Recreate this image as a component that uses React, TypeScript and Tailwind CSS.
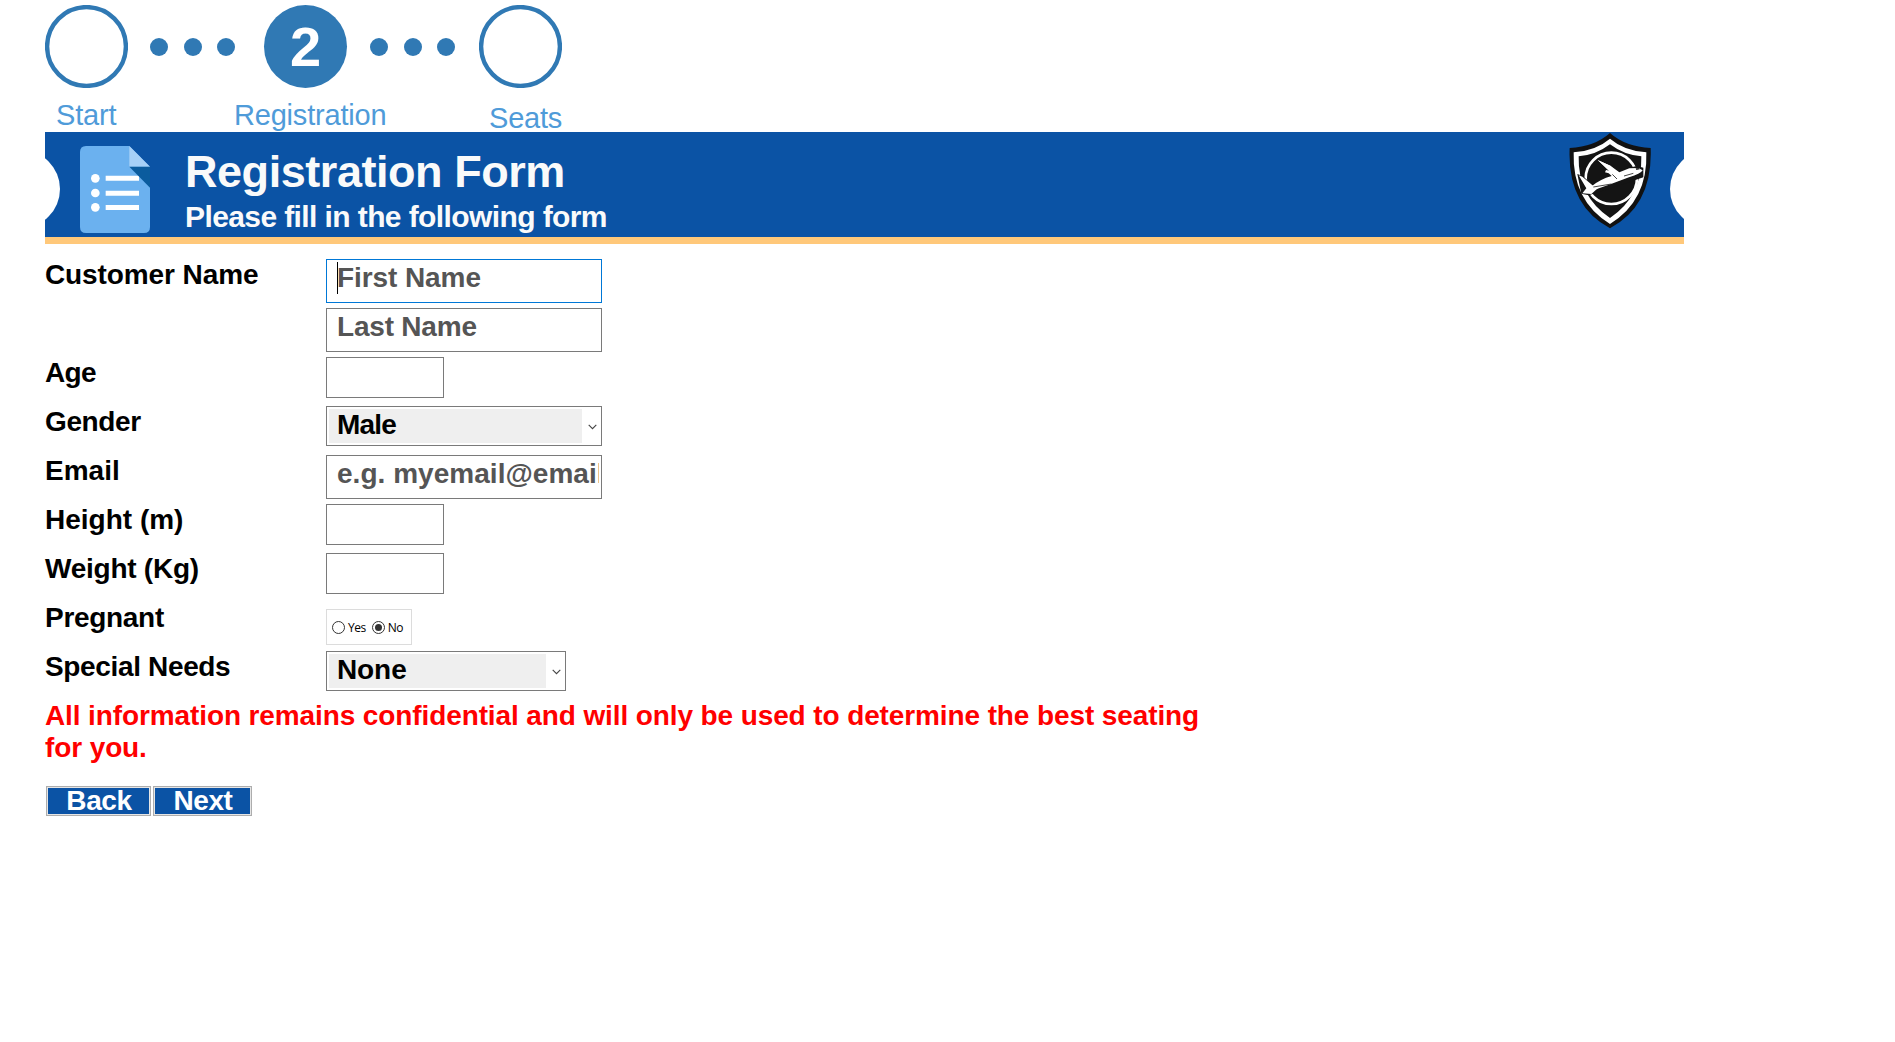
import React from "react";

const ARIAL = "font-['Liberation_Sans',Arial,sans-serif]";

function Ring() {
  return (
    <svg className="size-[83px] shrink-0" viewBox="0 0 83 83">
      <circle cx="41.5" cy="41.5" r="39.4" fill="#fff" stroke="#3079b4" strokeWidth="4.4" />
    </svg>
  );
}

function Dots() {
  return (
    <div className="flex items-center pt-px">
      <i className="size-[18px] rounded-full bg-[#3079b4]" />
      <i className="ml-4 size-[18px] rounded-full bg-[#3079b4]" />
      <i className="ml-[15px] size-[18px] rounded-full bg-[#3079b4]" />
    </div>
  );
}

function Steps() {
  return (
    <div className="h-[132px] pt-[5px]">
      <div className="flex h-[83px]">
        <Ring />
        <div className="ml-[22px] flex w-[114px]"><Dots /></div>
        <div className="flex size-[83px] items-center justify-center rounded-full bg-[#3079b4] text-[56px] leading-[83px] font-bold text-white">2</div>
        <div className="ml-[23px] flex w-[109px]"><Dots /></div>
        <Ring />
      </div>
      <div className="flex text-[29px] leading-[32px] whitespace-nowrap text-[#4f9bd9]">
        <span className="ml-[11px] mt-[11px] w-[178px] tracking-[-0.2px]">Start</span>
        <span className="mt-[11px] w-[255px] tracking-[-0.2px]">Registration</span>
        <span className="mt-[14px] tracking-[-0.2px]">Seats</span>
      </div>
    </div>
  );
}

function FormIcon() {
  return (
    <svg className="mt-[14px] ml-[35px] h-[87px] w-[70px] shrink-0" viewBox="0 0 210 261">
      <path d="M18 0H148L210 62V243Q210 261 192 261H18Q0 261 0 243V18Q0 0 18 0Z" fill="#6bb1ef" />
      <path d="M148 0L210 62H148Z" fill="#a6d0f7" />
      <g fill="#fff">
        <circle cx="46" cy="97" r="13" />
        <circle cx="46" cy="141" r="13" />
        <circle cx="46" cy="184" r="13" />
        <path d="M77 89H177V104H77ZM77 134H177V149H77ZM77 177H177V192H77Z" />
      </g>
      <path d="M148 62H210V125Z" fill="#0b5c9e" />
    </svg>
  );
}

function Shield() {
  return (
    <svg className="mt-px ml-auto mr-[33px] h-[96px] w-[82px] shrink-0" viewBox="57 22 246 288">
      <path d="M180 22Q226 63 302 67Q309 239 180 308Q51 239 59 67Q134 63 180 22Z" fill="#111" />
      <path d="M180 39Q222 75 289 80Q294 225 180 295Q66 225 71 80Q138 75 180 39Z" fill="#fff" />
      <path d="M180 56Q222 88 274 92Q277 212 180 277Q83 212 86 92Q138 88 180 56Z" fill="#141414" />
      <circle cx="184" cy="158" r="77" fill="none" stroke="#fff" strokeWidth="8" />
      <path d="M82 145L98 151L126 176L164 163L190 140L145 104L181 116L216 130L262 121L280 126V155L192 185L116 209L94 204Z" fill="#141414" />
      <path d="M86 149L97 153L130 181L160 173L124 205L97 203L109 188Z" fill="#fff" />
      <path d="M126 181Q150 161 185 151L176 143L165 140L168 133L178 135L143 103L181 120L208 140L238 128L265 127L278 134Q272 145 237 155L181 176L115 199Z" fill="#fff" />
      <path d="M143 103L181 120L207 145L194 158L178 137Z" fill="#fff" />
      <path d="M187 146L201 160M222 151L250 143M130 184L184 175" stroke="#222" strokeWidth="2.5" fill="none" />
      <path d="M257 128L266 127L269 131L259 133Z" fill="#222" />
    </svg>
  );
}

function Banner() {
  return (
    <header className="relative flex h-[112px] w-[1639px] overflow-hidden border-b-[7px] border-[#ffc87a] bg-[#0b53a5] text-[#fafafa]">
      <div className="absolute top-[18px] left-[-63px] size-[78px] rounded-full bg-white" />
      <div className="absolute top-[18px] right-[-64px] size-[78px] rounded-full bg-white" />
      <FormIcon />
      <div className="ml-[35px] font-bold whitespace-nowrap">
        <h1 className="mt-[14px] text-[45px] leading-[52px] tracking-[-0.45px]">Registration Form</h1>
        <p className="mt-[2px] text-[30px] leading-[34px] tracking-[-0.6px]">Please fill in the following form</p>
      </div>
      <Shield />
    </header>
  );
}

function Row({
  label,
  tracking = "",
  children,
}: {
  label?: string;
  tracking?: string;
  children: React.ReactNode;
}) {
  return (
    <div className="flex h-[49px]">
      <div className={`w-[281px] shrink-0 pt-px text-[28px] leading-[32px] font-bold ${tracking}`}>{label}</div>
      <div className="pt-px">{children}</div>
    </div>
  );
}

function TextBox({ hint, active, tracking = "" }: { hint: string; active?: boolean; tracking?: string }) {
  return (
    <div className={`h-[44px] w-[276px] border pr-[2px] ${active ? "border-[#0078d7]" : "border-[#7a7a7a]"}`}>
      <div className={`relative ml-[10px] overflow-hidden pt-px text-[28px] leading-[34px] font-bold whitespace-nowrap text-[#555] ${tracking}`}>
        {active && <span className="absolute top-[2px] left-0 h-[32px] w-px bg-black" />}
        {hint}
      </div>
    </div>
  );
}

function NumberBox() {
  return <div className="h-[41px] w-[118px] border border-[#7a7a7a]" />;
}

function SelectBox({ value, wide }: { value: string; wide?: boolean }) {
  return (
    <div className={`flex h-[40px] border border-[#7a7a7a] p-[2px] ${wide ? "w-[276px]" : "w-[240px]"}`}>
      <div className={`flex-1 bg-[#efefef] pl-2 text-[28px] leading-[32px] font-bold ${wide ? "tracking-[-0.8px]" : "tracking-[-0.1px]"}`}>
        {value}
      </div>
      <svg className="mt-[15px] mr-[2px] ml-[6px] h-[6px] w-[9px]" viewBox="0 0 9 6">
        <path d="M.7 .8L4.5 4.6L8.3 .8" fill="none" stroke="#444" strokeWidth="1.1" />
      </svg>
    </div>
  );
}

function Radio({ label, on }: { label: string; on?: boolean }) {
  return (
    <span className="flex items-center">
      <i className="flex size-[13px] items-center justify-center rounded-full border border-[#333]">
        {on && <b className="size-[7px] rounded-full bg-[#333]" />}
      </i>
      <span className="ml-[3px]">{label}</span>
    </span>
  );
}

function Button({ children, width }: { children: string; width: string }) {
  return (
    <button className={`h-[30px] border border-[#adadad] bg-[#e5e5e5] p-px text-[28px] font-bold text-white ${width}`}>
      <span className="block h-full bg-[#0b53a5] pl-px leading-[26px] tracking-[-0.4px]">{children}</span>
    </button>
  );
}

export default function App() {
  return (
    <div className={`min-h-screen overflow-hidden bg-white pl-[45px] text-black ${ARIAL}`}>
      <Steps />
      <Banner />
      <main className="pt-[14px]">
        <Row label="Customer Name" tracking="tracking-[-0.1px]">
          <TextBox hint="First Name" tracking="tracking-[-0.08px]" active />
        </Row>
        <Row><TextBox hint="Last Name" tracking="tracking-[-0.2px]" /></Row>
        <Row label="Age" tracking="tracking-[-0.6px]"><NumberBox /></Row>
        <Row label="Gender" tracking="tracking-[-0.4px]"><SelectBox value="Male" wide /></Row>
        <Row label="Email"><TextBox hint="e.g. myemail@email.com" tracking="tracking-[0.03px]" /></Row>
        <Row label="Height (m)"><NumberBox /></Row>
        <Row label="Weight (Kg)" tracking="tracking-[-0.25px]"><NumberBox /></Row>
        <Row label="Pregnant" tracking="tracking-[-0.3px]">
          <div className="mt-[7px] flex h-[36px] w-[86px] items-center gap-[6px] border border-[#dcdcdc] pt-px pl-[5px] font-['Open_Sans',sans-serif] text-[12px] leading-4 tracking-[-0.5px]">
            <Radio label="Yes" />
            <Radio label="No" on />
          </div>
        </Row>
        <Row label="Special Needs" tracking="tracking-[-0.35px]"><SelectBox value="None" /></Row>
        <p className="pt-px text-[28px] leading-[32px] font-bold tracking-[-0.11px] whitespace-nowrap text-[#f00]">
          All information remains confidential and will only be used to determine the best seating
          <br />
          for you.
        </p>
        <div className="mt-[22px] ml-px flex gap-[2px]">
          <Button width="w-[105px]">Back</Button>
          <Button width="w-[99px]">Next</Button>
        </div>
      </main>
    </div>
  );
}
